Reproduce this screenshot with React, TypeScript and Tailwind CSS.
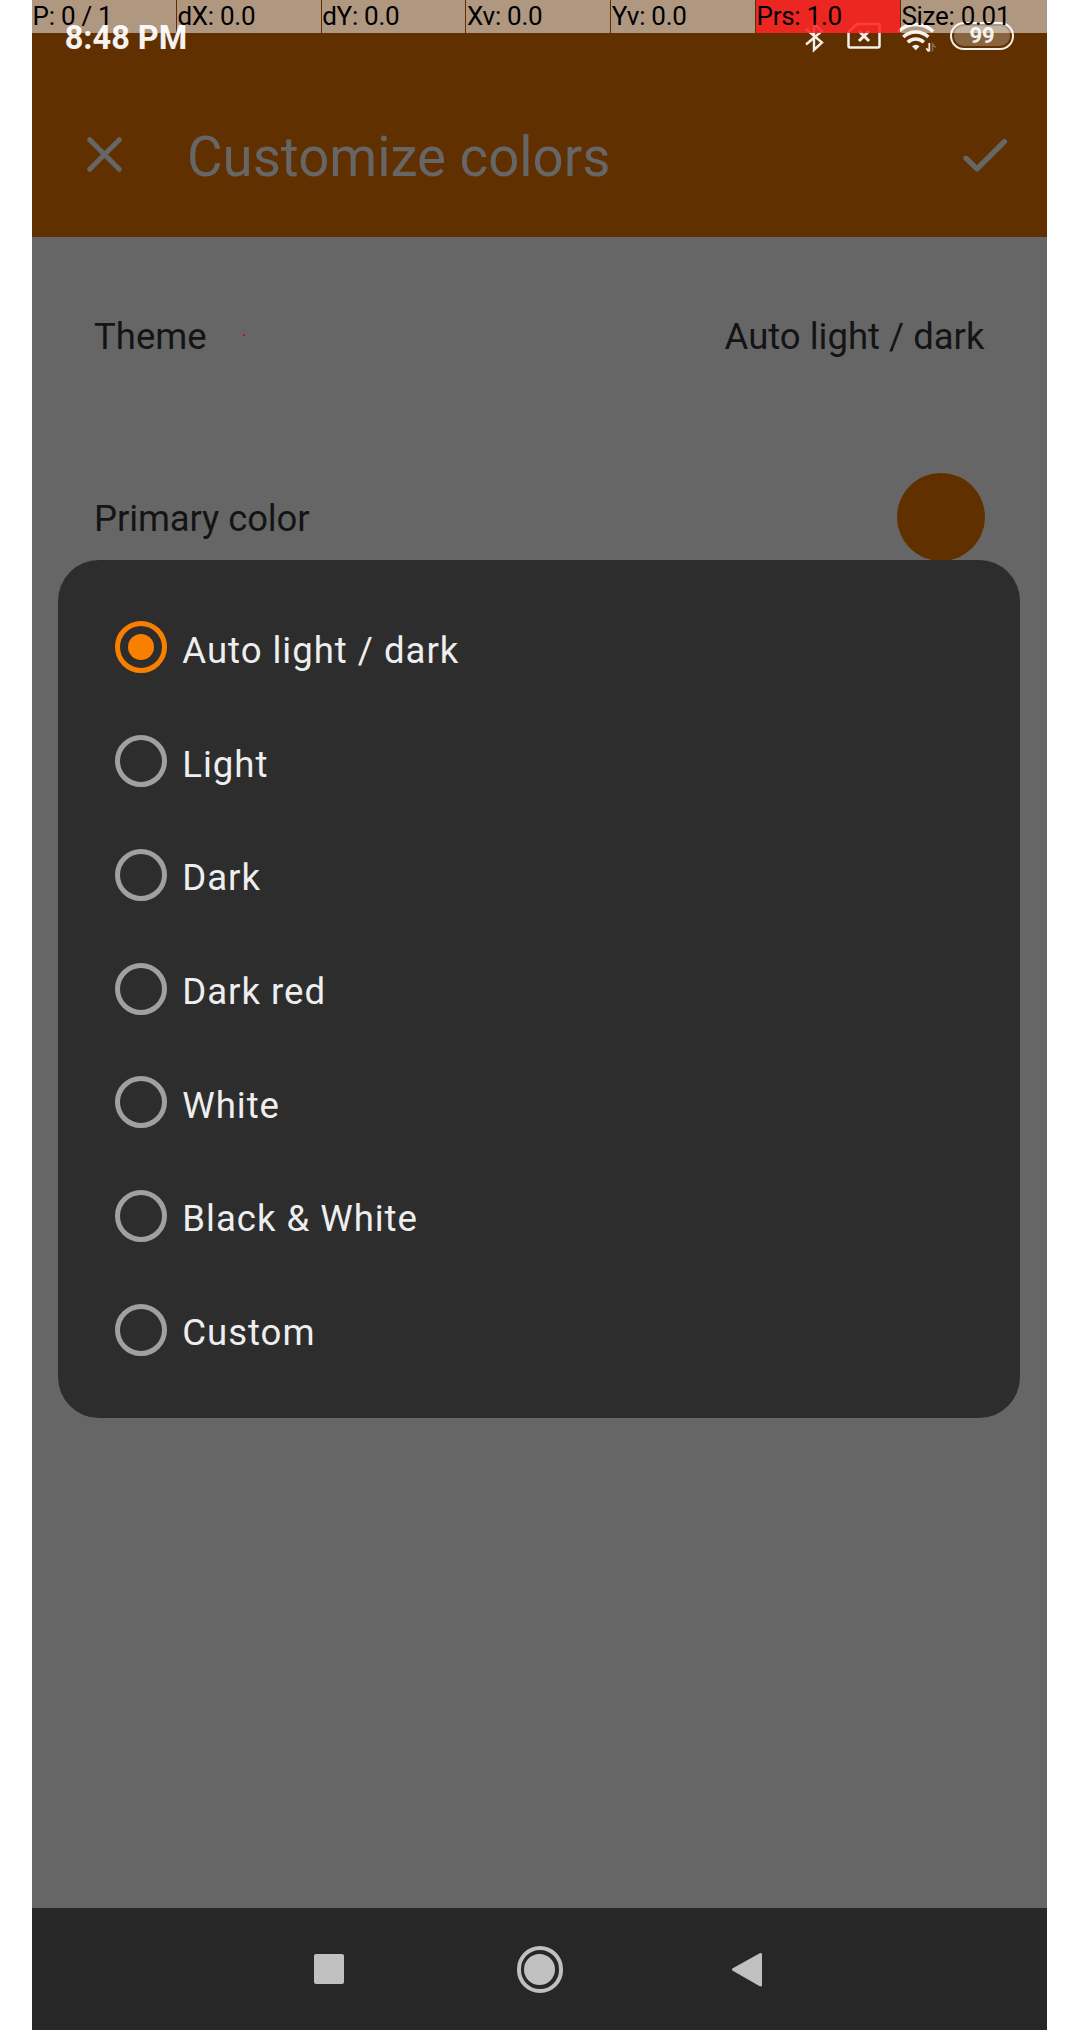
const metrics = ["P: 0 / 1", "dX: 0.0", "dY: 0.0", "Xv: 0.0", "Yv: 0.0", "Prs: 1.0", "Size: 0.01"];

const themes = ["Auto light / dark", "Light", "Dark", "Dark red", "White", "Black & White", "Custom"];

function PointerStrip() {
  return (
    <div className="absolute inset-x-0 top-0 z-10 flex h-[33px]">
      {metrics.map((label) => (
        <div key={label} className="w-[144.800px] shrink-0 pr-px last:w-auto last:flex-1 last:pr-0">
          <div
            className={`h-full pl-[0.6px] text-[26px] leading-[33px] tracking-[-0.280px] whitespace-nowrap text-black ${
              label.startsWith("Prs") ? "bg-[#ff2626]/88" : "bg-white/50"
            }`}
          >
            {label}
          </div>
        </div>
      ))}
    </div>
  );
}

function StatusIcons() {
  return (
    <div className="flex items-start pt-5 text-[#f3efeb]">
      <svg width="22" height="34" viewBox="0 0 22 34" fill="none" stroke="currentColor" strokeWidth="2.4">
        <path d="M2 9 18 22.500 10 30V3.500L18 11 2 24.500" />
      </svg>
      <svg className="ml-[20px]" width="36" height="32" viewBox="0 0 36 32" fill="none" stroke="currentColor" strokeWidth="2.5">
        <path d="M11 4H32a1.500 1.500 0 0 1 1.500 1.500V26a1.500 1.500 0 0 1-1.500 1.500H4A1.500 1.500 0 0 1 2.500 26V12Z" strokeLinejoin="round" />
        <path d="m13 11 10 10m0-10L13 21" strokeWidth="3" />
      </svg>
      <svg className="ml-[15px]" width="42" height="34" viewBox="0 0 42 34" fill="none" stroke="currentColor" strokeWidth="3.600">
        <path d="M1.500 11.500a25 25 0 0 1 34.600 0M6.300 17a18 18 0 0 1 25 0M10.800 22.200a11.500 11.500 0 0 1 16 0" />
        <path d="M18.800 30.300 15 26.200a5.500 5.500 0 0 1 7.600 0Z" fill="currentColor" stroke="none" />
        <path d="M32.300 23v8.500m-3-3.200 2.500 3" strokeWidth="1.800" />
        <path d="M35.500 31.500V24l3 3.500" strokeWidth="1.600" opacity="0.3" />
      </svg>
      <div className="mt-[1.700px] ml-[11.500px] h-[28.300px] w-[64px] rounded-full border-[2.300px] border-current p-[2px]">
        <div className="flex h-full items-center justify-center rounded-full bg-white/25">
          <span className="text-[22px] leading-none font-bold">99</span>
        </div>
      </div>
    </div>
  );
}

function Radio({ checked }: { checked: boolean }) {
  return (
    <span
      className={`flex size-[52px] shrink-0 items-center justify-center rounded-full border-[5px] ${
        checked ? "border-[#f87f00]" : "border-[#a0a0a0]"
      }`}
    >
      {checked && <span className="size-[26px] rounded-full bg-[#f87f00]" />}
    </span>
  );
}

export default function App() {
  return (
    <div className="h-[2030px] w-[1088px] overflow-hidden bg-white pl-8 font-[Roboto,sans-serif]">
      <div className="relative flex h-full w-[1015px] flex-col bg-[#666666]">
        <PointerStrip />

        <header className="h-[237px] bg-[#613000]">
          <div className="flex h-[72px] justify-between pr-[33px] pl-[32.700px]">
            <span className="pt-[19px] text-[32.500px] leading-[38px] font-bold text-[#f6f2ef]">8:48 PM</span>
            <StatusIcons />
          </div>
          <div className="flex h-[165px] items-center pr-[38px] pl-[53px] text-[#666666]">
            <svg className="-mt-px shrink-0" width="38" height="38" viewBox="0 0 38 38" fill="none" stroke="currentColor" strokeWidth="5" strokeLinecap="round">
              <path d="M4.700 4.700 34.300 34.300M34.300 4.700 4.700 34.300" />
            </svg>
            <h1 className="mt-[5px] ml-[64px] text-[54.600px] leading-[64px] font-normal">Customize colors</h1>
            <svg className="ml-auto shrink-0" width="48" height="38" viewBox="0 0 48 38" fill="none" stroke="currentColor" strokeWidth="5.300" strokeLinecap="round" strokeLinejoin="round">
              <path d="M5 22.200 16 32.800 43.500 5.500" />
            </svg>
          </div>
        </header>

        <main className="flex-1 pr-[62.500px] pl-[62px] text-[36.500px] leading-[44px] text-[#141414]">
          <div className="flex h-[198px] items-center">
            <span className="mt-[2px]">Theme</span>
            <span className="-mt-[3px] ml-[36px] size-[2px] bg-red-600" />
            <span className="mt-[2px] ml-auto">Auto light / dark</span>
          </div>
          <div className="flex h-[163px] items-center justify-between">
            <span className="mt-[5px] tracking-[-0.120px]">Primary color</span>
            <span className="size-[88px] rounded-full bg-[#613000]" />
          </div>
        </main>

        <nav className="flex h-[122px] bg-[#272727] pl-[282px] text-[#c0c0c0]">
          <span className="mt-[46px] h-[30px] w-[30px] rounded-[2px] bg-current" />
          <span className="mt-[38px] ml-[172.500px] flex size-[46.500px] items-center justify-center rounded-full border-[4px] border-current">
            <span className="size-[31px] shrink-0 rounded-full bg-current" />
          </span>
          <svg className="mt-[43px] ml-[166.500px]" width="34" height="38" viewBox="0 0 34 38" fill="currentColor" stroke="currentColor" strokeWidth="3" strokeLinejoin="round">
            <path d="M30.500 3.500v30.500L3.500 18.500Z" />
          </svg>
        </nav>

        <section className="absolute top-[560px] left-[26.400px] h-[858px] w-[962px] rounded-[41px] bg-[#2d2d2d] pt-[30.500px] pl-[56.600px]">
          {themes.map((name, i) => (
            <label key={name} className="flex h-[113.730px] items-center">
              <Radio checked={i === 0} />
              <span className="mt-[7px] ml-[15.300px] text-[36.600px] leading-[44px] tracking-[0.970px] text-[#eeeeee]">{name}</span>
            </label>
          ))}
        </section>
      </div>
    </div>
  );
}
